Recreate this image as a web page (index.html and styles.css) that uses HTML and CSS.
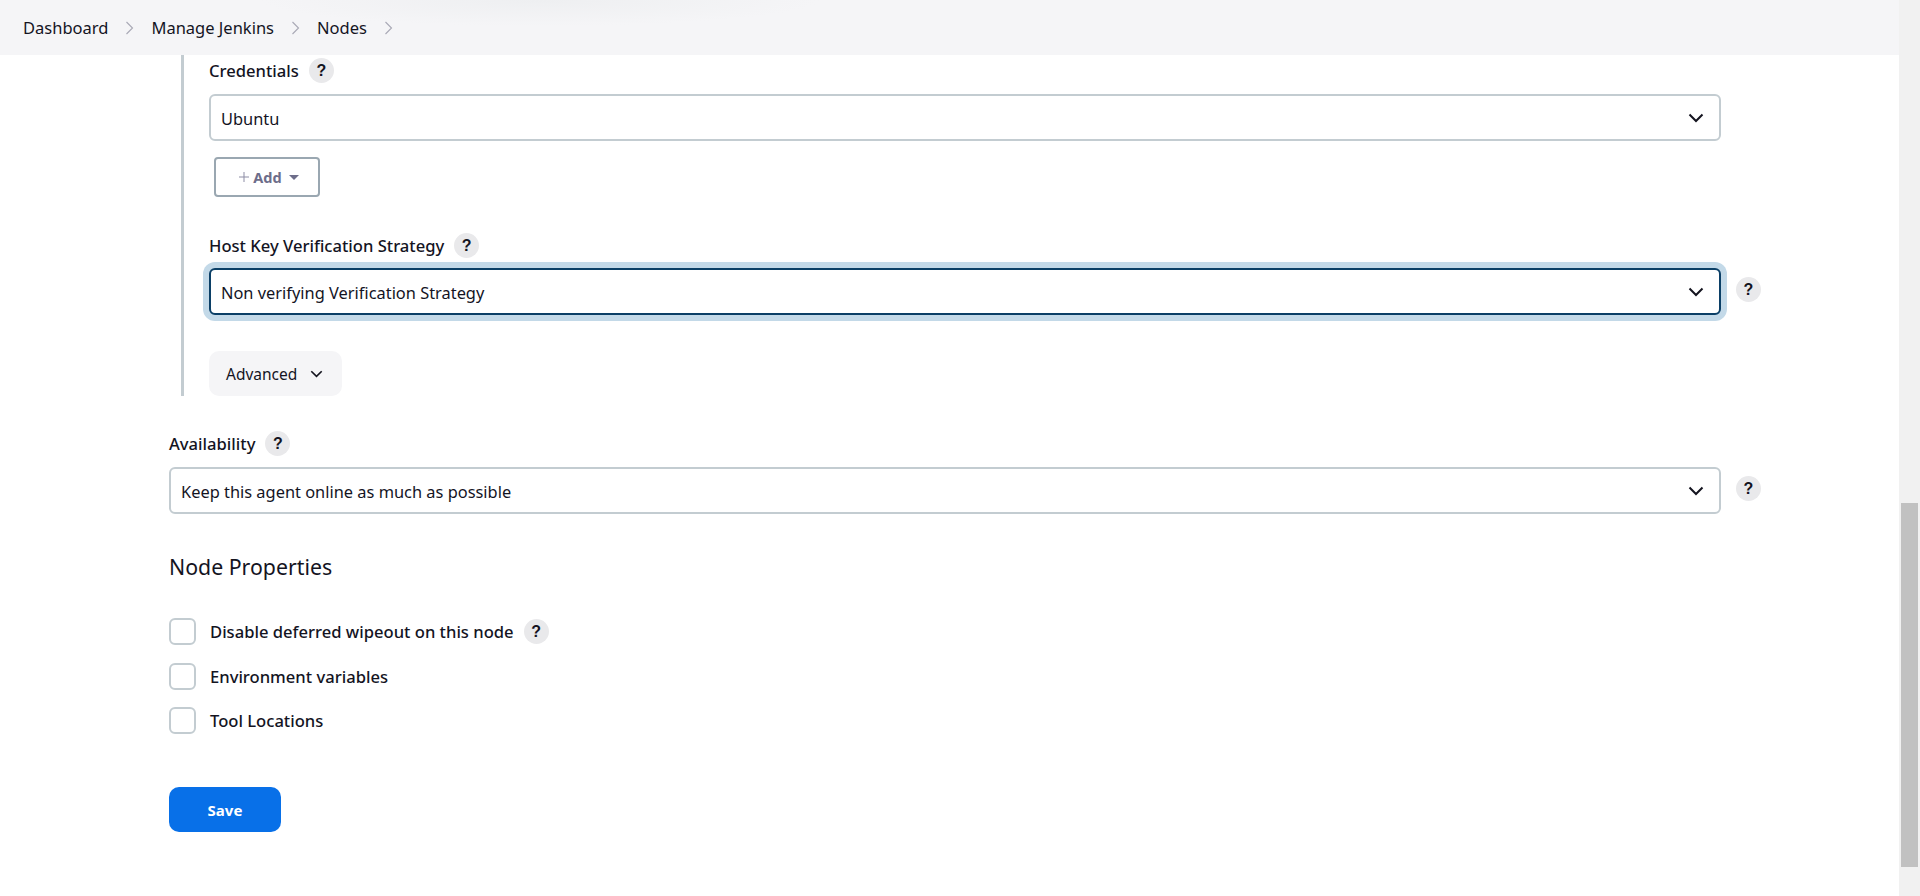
FILE: index.html
```html
<!DOCTYPE html>
<html lang="en">
  <head>
    <meta charset="utf-8" />
    <title>Nodes - Jenkins</title>
    <link rel="stylesheet" href="styles.css">
  </head>
  <body>
    <div class="page">
      <nav class="crumbs">
        <a class="crumb">Dashboard</a>
        <svg class="crumbsep" viewBox="0 0 12 20"><path d="M2 2l8 8-8 8"/></svg>
        <a class="crumb">Manage Jenkins</a>
        <svg class="crumbsep" viewBox="0 0 12 20"><path d="M2 2l8 8-8 8"/></svg>
        <a class="crumb">Nodes</a>
        <svg class="crumbsep" viewBox="0 0 12 20"><path d="M2 2l8 8-8 8"/></svg>
      </nav>
      <main class="form">
        <div class="nested">
          <div class="label first"><span>Credentials</span><span class="help">?</span></div>
          <div class="selectrow">
            <div class="select"><span>Ubuntu</span><svg class="chev" viewBox="0 0 16 10"><path d="M1.5 1.5L8 8l6.500-6.500"/></svg></div>
          </div>
          <button type="button" class="addbtn"><svg class="plus" viewBox="0 0 10 10"><path d="M5 0v10M0 5h10"/></svg><b>Add</b><span class="caret"></span></button>
          <div class="label host"><span>Host Key Verification Strategy</span><span class="help">?</span></div>
          <div class="selectrow">
            <div class="select focus"><span>Non verifying Verification Strategy</span><svg class="chev" viewBox="0 0 16 10"><path d="M1.5 1.5L8 8l6.500-6.500"/></svg></div>
            <span class="help side">?</span>
          </div>
          <button type="button" class="advbtn">Advanced<svg class="chev small" viewBox="0 0 16 10"><path d="M1.500 1.500L8 8l6.500-6.500"/></svg></button>
        </div>
        <div class="label avail"><span>Availability</span><span class="help">?</span></div>
        <div class="selectrow">
          <div class="select"><span>Keep this agent online as much as possible</span><svg class="chev" viewBox="0 0 16 10"><path d="M1.5 1.5L8 8l6.500-6.500"/></svg></div>
          <span class="help side">?</span>
        </div>
        <h2 class="section">Node Properties</h2>
        <div class="checks">
          <label class="check"><span class="box"></span><span>Disable deferred wipeout on this node</span><span class="help">?</span></label>
          <label class="check"><span class="box"></span><span>Environment variables</span></label>
          <label class="check"><span class="box"></span><span>Tool Locations</span></label>
        </div>
        <button type="button" class="save">Save</button>
      </main>
    </div>
    <div class="scrollbar"><div class="thumb"></div></div>
  </body>
</html>
```

FILE: styles.css
```css
html, body {
  margin: 0;
  height: 100%;
}
body {
  display: flex;
  height: 896px;
  overflow: hidden;
  background: #fff;
  color: #14141f;
  font-family: "Noto Sans", "Liberation Sans", sans-serif;
  font-size: 16.6px;
}
.page {
  flex: 1;
  min-width: 0;
}
.scrollbar {
  width: 21px;
  background: #f1f1f1;
}
.thumb {
  margin: 503px 2px 0 2px;
  height: 364px;
  background: #c1c1c1;
}

/* top bar */
.crumbs {
  display: flex;
  align-items: center;
  height: 55px;
  padding-left: 23px;
  background: radial-gradient(ellipse 280px 26px at 540px 0, #eeeff1, transparent), #f5f5f7;
}
.crumb {
  font-size: 16.5px;
  color: #14141f;
}
.crumbsep {
  width: 9px;
  height: 16px;
  margin: 0 17px;
  fill: none;
  stroke: #a9a9b5;
  stroke-width: 1.5;
}

/* form */
.form {
  padding-left: 169px;
}
.nested {
  margin-left: 12px;
  padding-left: 25px;
  border-left: 3px solid #c3ccd1;
  height: 341px;
}
.label {
  display: flex;
  align-items: center;
  gap: 10px;
  height: 25px;
  font-weight: 500;
}
.label.first {
  padding-top: 3px;
  margin-bottom: 11px;
}
.label.host {
  margin-top: 36px;
  margin-bottom: 10px;
}
.label.avail {
  margin-top: 35px;
  margin-bottom: 11px;
}
.help {
  display: inline-flex;
  align-items: center;
  justify-content: center;
  width: 25px;
  height: 25px;
  border-radius: 50%;
  background: #e9e9eb;
  font-family: "Liberation Sans", sans-serif;
  font-size: 16px;
  font-weight: 700;
  flex: none;
}
.help.side {
  margin-left: 15px;
  margin-bottom: 4px;
}
.selectrow {
  display: flex;
  align-items: center;
}
.select {
  box-sizing: border-box;
  display: flex;
  align-items: center;
  justify-content: space-between;
  width: 1552px;
  height: 47px;
  padding: 2px 15px 0 10px;
  border: 2px solid #c3ccd1;
  border-radius: 6px;
  font-size: 16.4px;
  font-weight: 380;
  background: #fff;
}
.nested .select {
  width: 1512px;
}
.select.focus {
  border-color: #0b3f66;
  box-shadow: 0 0 0 6px #c3d9e8;
}
.chev {
  width: 16px;
  height: 10px;
  margin-top: -2px;
  fill: none;
  stroke: #14141f;
  stroke-width: 2;
}
.chev.small {
  width: 13px;
  height: 8px;
  margin-top: 0;
  margin-left: 13px;
}
.addbtn {
  display: flex;
  align-items: center;
  justify-content: center;
  box-sizing: border-box;
  width: 106px;
  height: 40px;
  margin: 16px 0 0 5px;
  padding: 0 0 0 4px;
  border: 2px solid #9aa7b1;
  border-radius: 4px;
  background: #fff;
  color: #6d6d8a;
  font-family: inherit;
  font-size: 14.5px;
}
.plus {
  width: 10px;
  height: 10px;
  margin-right: 4px;
  fill: none;
  stroke: #8d8da5;
  stroke-width: 1;
}
.caret {
  width: 0;
  height: 0;
  margin-left: 7px;
  border-left: 5px solid transparent;
  border-right: 5px solid transparent;
  border-top: 5px solid #6d6d8a;
}
.advbtn {
  display: flex;
  align-items: center;
  box-sizing: border-box;
  width: 133px;
  height: 45px;
  margin-top: 36px;
  padding: 0 0 0 17px;
  border: 0;
  border-radius: 10px;
  background: #f5f5f7;
  color: #14141f;
  font-family: inherit;
  font-size: 15.5px;
  font-weight: 450;
}
.section {
  margin: 39px 0 0 0;
  font-size: 21.3px;
  font-weight: 450;
  line-height: 27px;
}
.checks {
  display: flex;
  flex-direction: column;
  gap: 17.5px;
  margin-top: 38px;
}
.check {
  display: flex;
  align-items: center;
  height: 27px;
  font-weight: 500;
}
.box {
  box-sizing: border-box;
  width: 27px;
  height: 27px;
  margin-right: 14px;
  border: 2.5px solid #c3ccd1;
  border-radius: 6px;
}
.check .help {
  margin-left: 10px;
}
.save {
  display: block;
  width: 112px;
  height: 45px;
  margin-top: 53px;
  border: 0;
  border-radius: 10px;
  background: #0870e8;
  color: #fff;
  font-family: inherit;
  font-size: 15px;
  font-weight: 700;
}
```
